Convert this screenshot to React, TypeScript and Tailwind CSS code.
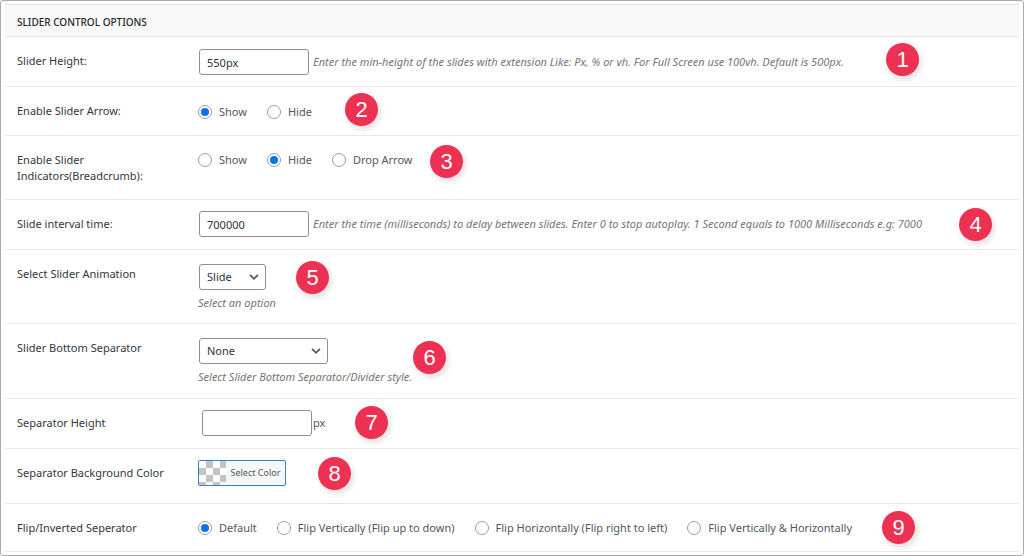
import type { ReactNode } from "react";

function Badge({ n, place }: { n: number; place: string }) {
  return (
    <span
      className={`absolute flex size-[33px] items-center justify-center rounded-full bg-[#ec3153] font-['Liberation_Sans',sans-serif] text-[22px] leading-none text-white shadow-[2px_3px_6px_rgba(0,0,0,0.15)] ${place}`}
    >
      {n}
    </span>
  );
}

type RowProps = {
  label: string;
  htmlFor?: string;
  id?: string;
  pad: string;
  n: number;
  place: string;
  children: ReactNode;
};

function Row({ label, htmlFor, id, pad, n, place, children }: RowProps) {
  return (
    <div className="relative flex border-b border-[#e8e8e8] pl-3">
      <div className="w-[181px] shrink-0 pt-4 pr-6 pb-[15px] text-[#32373c]">
        {htmlFor ? <label htmlFor={htmlFor}>{label}</label> : <span id={id}>{label}</span>}
      </div>
      <div className={`min-w-0 flex-1 ${pad}`}>{children}</div>
      <Badge n={n} place={place} />
    </div>
  );
}

function Radios({ name, options, checked, labelledBy }: { name: string; options: string[]; checked: string; labelledBy: string }) {
  return (
    <div role="radiogroup" aria-labelledby={labelledBy} className="flex flex-wrap gap-x-5">
      {options.map((o) => (
        <label key={o} className="flex items-center gap-[7px] whitespace-nowrap">
          <input
            type="radio"
            name={name}
            defaultChecked={o === checked}
            className="size-[14px] appearance-none rounded-full border border-[#9a9da1] bg-white bg-clip-content p-[2px] checked:bg-[#0b74e5]"
          />
          {o}
        </label>
      ))}
    </div>
  );
}

const field = "h-[26px] rounded-[3px] border border-[#8c8f94] bg-white px-[7px] text-[#2c3338]";

function Select({ id, options, width }: { id: string; options: string[]; width: string }) {
  return (
    <div className={`relative ml-px ${width}`}>
      <select id={id} className={`${field} w-full appearance-none`}>
        {options.map((o) => (
          <option key={o}>{o}</option>
        ))}
      </select>
      <svg viewBox="0 0 10 6" className="pointer-events-none absolute top-[10px] right-[7px] h-[6px] w-[10px]" fill="none" stroke="#50575e" strokeWidth="1.7">
        <path d="M1 0.8 5 4.8 9 0.8" />
      </svg>
    </div>
  );
}

function Hint({ children }: { children: ReactNode }) {
  return <p className="text-[#757575] italic">{children}</p>;
}

export default function App() {
  return (
    <main className="min-h-screen rounded-[3px] border border-[#a9a9a9] bg-white px-1 pt-[3px] font-['Noto_Sans','Open_Sans',sans-serif] text-[11px] leading-4 text-[#50575e]">
      <h2 className="border-y border-[#e4e4e4] bg-[#f9f9f9] px-3 pt-[9px] pb-[6px] text-[10px] font-medium text-[#23282d]">
        SLIDER CONTROL OPTIONS
      </h2>

      <Row label="Slider Height:" htmlFor="height" pad="pt-3 pb-[11px]" n={1} place="top-[6px] left-[881px]">
        <div className="ml-px flex items-center gap-1">
          <input id="height" defaultValue="550px" className={`${field} w-[110px]`} />
          <Hint>Enter the min-height of the slides with extension Like: Px, % or vh. For Full Screen use 100vh. Default is 500px.</Hint>
        </div>
      </Row>

      <Row label="Enable Slider Arrow:" id="arrow" pad="pt-[17px] pb-[15px]" n={2} place="top-[6px] left-[340px]">
        <Radios name="arrow" options={["Show", "Hide"]} checked="Show" labelledBy="arrow" />
      </Row>

      <Row label="Enable Slider Indicators(Breadcrumb):" id="indicators" pad="pt-4 pb-[31px]" n={3} place="top-[9px] left-[425px]">
        <Radios name="indicators" options={["Show", "Hide", "Drop Arrow"]} checked="Hide" labelledBy="indicators" />
      </Row>

      <Row label="Slide interval time:" htmlFor="interval" pad="pt-[11px] pb-3" n={4} place="top-[8px] left-[954px]">
        <div className="ml-px flex items-center gap-1">
          <input id="interval" defaultValue="700000" className={`${field} w-[110px]`} />
          <Hint>Enter the time (milliseconds) to delay between slides. Enter 0 to stop autoplay. 1 Second equals to 1000 Milliseconds e.g: 7000</Hint>
        </div>
      </Row>

      <Row label="Select Slider Animation" htmlFor="animation" pad="pt-[14px] pb-3" n={5} place="top-[11px] left-[291px]">
        <Select id="animation" options={["Slide", "Fade"]} width="w-[67px]" />
        <div className="pt-[5px]">
          <Hint>Select an option</Hint>
        </div>
      </Row>

      <Row label="Slider Bottom Separator" htmlFor="separator" pad="pt-[14px] pb-[13px]" n={6} place="top-[17px] left-[408px]">
        <Select id="separator" options={["None"]} width="w-[129px]" />
        <div className="pt-[5px]">
          <Hint>Select Slider Bottom Separator/Divider style.</Hint>
        </div>
      </Row>

      <Row label="Separator Height" htmlFor="sep-height" pad="pt-[11px] pb-3" n={7} place="top-[7px] left-[350px]">
        <div className="flex items-center gap-px pl-1">
          <input id="sep-height" className={`${field} w-[110px]`} />
          <span>px</span>
        </div>
      </Row>

      <Row label="Separator Background Color" id="sep-color" pad="pt-[11px] pb-[17px]" n={8} place="top-[8px] left-[313px]">
        <button
          type="button"
          aria-describedby="sep-color"
          className="flex h-[26px] w-[88px] items-stretch overflow-hidden rounded-[2px] border border-[#3582c4] bg-[#f6f7f7] text-[9px] text-[#50575e]"
        >
          <span className="w-[27px] bg-[repeating-conic-gradient(#c4c4c4_0_25%,#ffffff_0_50%)] bg-[length:14px_14px]" />
          <span className="flex flex-1 items-center justify-center">Select Color</span>
        </button>
      </Row>

      <Row label="Flip/Inverted Seperator" id="flip" pad="pt-4 pb-[15px]" n={9} place="top-[7px] left-[877px]">
        <Radios
          name="flip"
          options={["Default", "Flip Vertically (Flip up to down)", "Flip Horizontally (Flip right to left)", "Flip Vertically & Horizontally"]}
          checked="Default"
          labelledBy="flip"
        />
      </Row>
    </main>
  );
}
